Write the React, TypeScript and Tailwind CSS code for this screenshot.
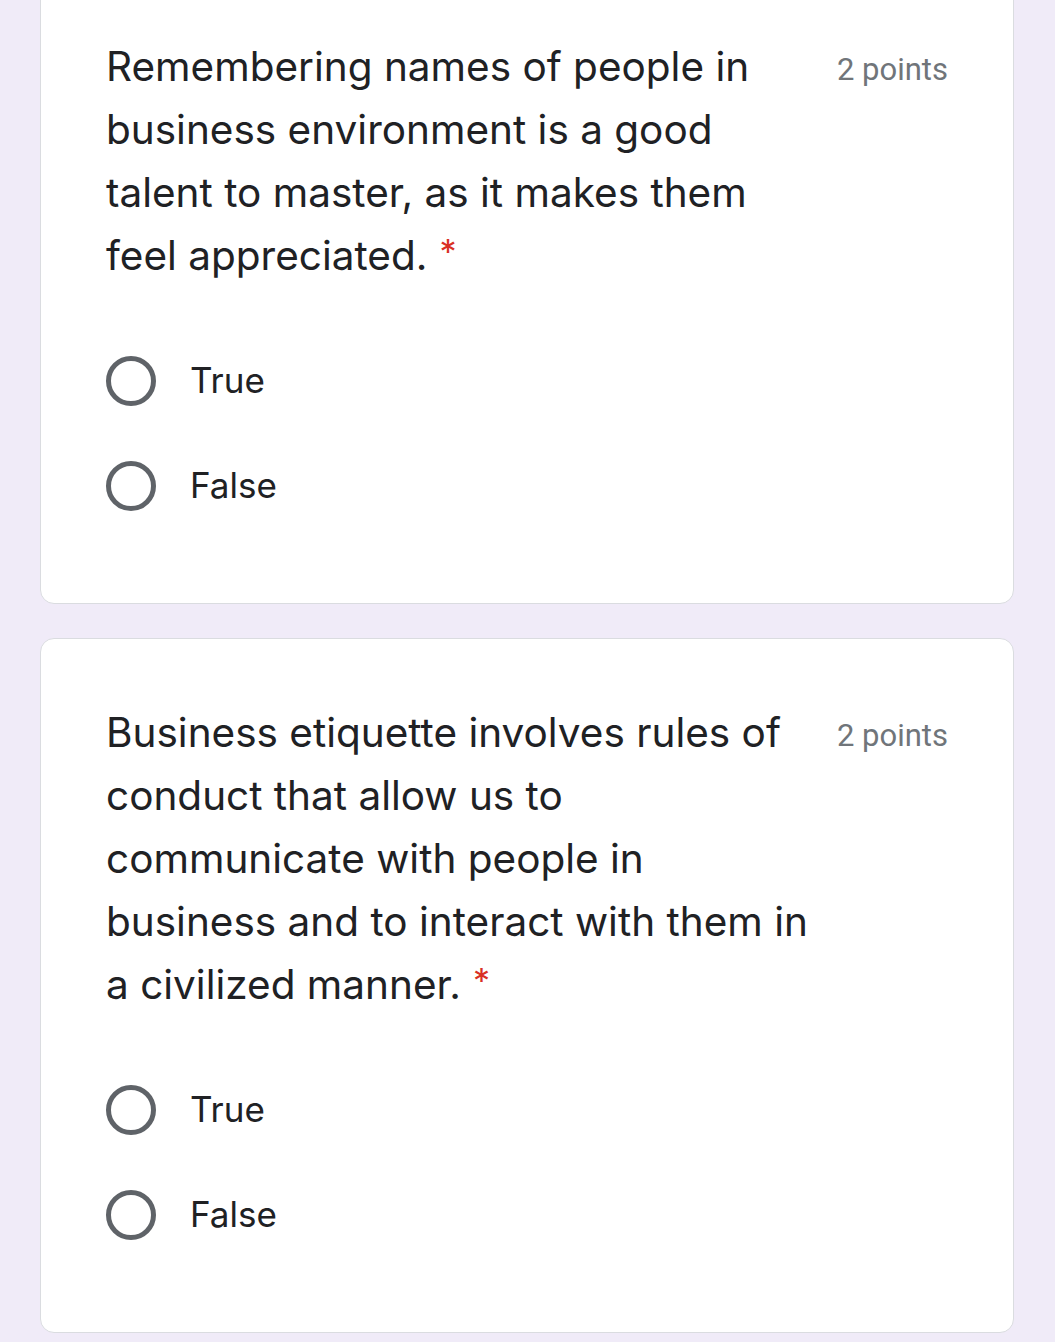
import React from "react";

function Radio({ label }: { label: string }) {
  return (
    <div className="flex items-center h-[105px]">
      <div className="w-[50px] h-[50px] rounded-full border-[5px] border-[#5f6368] shrink-0" />
      <span
        className="ml-[34px] text-[35px] text-[#202124] leading-none"
        style={{ fontFamily: "Inter, 'Liberation Sans', sans-serif" }}
      >
        {label}
      </span>
    </div>
  );
}

function Card({ lines, className }: { lines: string[]; className?: string }) {
  return (
    <div
      className={
        "bg-white border border-[#dadce0] rounded-[14px] pl-[65px] pr-[65px] pt-[62px] pb-[65px] " +
        (className ?? "")
      }
    >
      <div className="flex justify-between items-start">
        <div
          className="text-[40.5px] leading-[63px] text-[#202124]"
          style={{ fontFamily: "Inter, 'Liberation Sans', sans-serif" }}
        >
          {lines.map((l, i) => (
            <div key={i} className="whitespace-nowrap">
              {l}
              {i === lines.length - 1 && (
                <span className="text-[#d93025] text-[34px] ml-[12px] relative -top-[6px]">*</span>
              )}
            </div>
          ))}
        </div>
        <div
          className="text-[31px] leading-[63px] text-[#70757a] whitespace-nowrap mt-[3px]"
          style={{ fontFamily: "Roboto, 'Liberation Sans', sans-serif" }}
        >
          2 points
        </div>
      </div>
      <div className="mt-[39px]">
        <Radio label="True" />
        <Radio label="False" />
      </div>
    </div>
  );
}

export default function App() {
  return (
    <div className="w-[1055px] h-[1342px] overflow-hidden bg-[#f0ebf8]">
      <div className="mx-[40px] w-[974px] -mt-[28px]">
        <Card
          lines={[
            "Remembering names of people in",
            "business environment is a good",
            "talent to master, as it makes them",
            "feel appreciated.",
          ]}
        />
        <Card
          className="mt-[34px]"
          lines={[
            "Business etiquette involves rules of",
            "conduct that allow us to",
            "communicate with people in",
            "business and to interact with them in",
            "a civilized manner.",
          ]}
        />
      </div>
    </div>
  );
}
